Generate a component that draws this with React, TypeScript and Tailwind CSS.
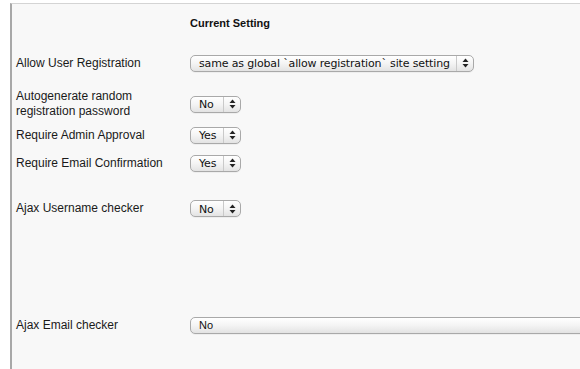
const SANS = { fontFamily: '"Liberation Sans", Arial, sans-serif' };

function Arrows() {
  return (
    <svg width="7" height="10" viewBox="0 0 7 10" className="block">
      <path d="M3.5 0.5 L6.5 4 L0.5 4 Z" fill="#222" />
      <path d="M3.5 9.5 L6.5 6 L0.5 6 Z" fill="#222" />
    </svg>
  );
}

function Select({ value, width, arrow = true }: { value: string; width: string; arrow?: boolean }) {
  return (
    <div
      className={`${width} flex h-[17px] shrink-0 items-stretch rounded-[5px] border border-[#a9a9a9] bg-gradient-to-b from-white via-[#f4f4f4] to-[#e3e3e3] leading-none whitespace-nowrap text-[#111] shadow-[0_1px_0_rgba(0,0,0,0.04)] ${arrow ? "text-[11px] tracking-[-0.15px]" : "text-[11px]"}`}
      style={arrow ? { fontFamily: '"DejaVu Sans", Verdana, sans-serif' } : SANS}
    >
      <span className="flex flex-1 items-center overflow-hidden px-[8px] pt-px">{value}</span>
      {arrow && (
        <span className="flex w-[17px] items-center justify-center border-l border-[#c9c9c9]">
          <Arrows />
        </span>
      )}
    </div>
  );
}

function Row({ h, label, children }: { h: string; label: React.ReactNode; children: React.ReactNode }) {
  return (
    <div className={`flex ${h} items-center`}>
      <div className="w-[178px] shrink-0 pl-[4px] text-[12px] leading-[15px] text-[#1a1a1a]">{label}</div>
      {children}
    </div>
  );
}

export default function App() {
  return (
    <div className="h-[369px] w-[580px] overflow-hidden bg-white pt-[3px] pl-[10px]" style={SANS}>
      <div className="h-[366px] border-t border-l-2 border-t-[#d4d4d4] border-l-[#a8a8a8] bg-[#f8f8f8]">
        <div className="flex h-[39px] items-center pl-[178px] text-[11px] font-bold text-[#111]">Current Setting</div>
        <Row h="h-[40px]" label="Allow User Registration">
          <Select value="same as global `allow registration` site setting" width="w-[284px]" />
        </Row>
        <Row h="h-[42px]" label={<>Autogenerate random<br />registration password</>}>
          <Select value="No" width="w-[51px]" />
        </Row>
        <Row h="h-[20px]" label="Require Admin Approval">
          <Select value="Yes" width="w-[51px]" />
        </Row>
        <Row h="h-[36px]" label="Require Email Confirmation">
          <Select value="Yes" width="w-[51px]" />
        </Row>
        <Row h="h-[55px]" label="Ajax Username checker">
          <Select value="No" width="w-[51px]" />
        </Row>
        <div className="h-[77px]" />
        <Row h="h-[24px]" label="Ajax Email checker">
          <Select value="No" width="w-[420px]" arrow={false} />
        </Row>
      </div>
    </div>
  );
}
